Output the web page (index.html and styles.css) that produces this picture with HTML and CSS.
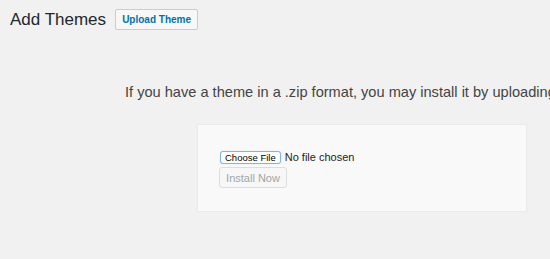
FILE: index.html
```html
<!DOCTYPE html>
<html lang="en">
<head>
    <meta charset="UTF-8">
    <meta name="viewport" content="width=device-width, initial-scale=1.0">
    <title>Add Themes</title>
    <link rel="stylesheet" href="styles.css">
</head>
<body>
    <div class="wrap">
        <div class="page-header">
            <h1 class="page-title">Add Themes</h1>
            <button class="upload-button">Upload Theme</button>
        </div>

        <div class="upload-theme">
            <p class="install-help">If you have a theme in a .zip format, you may install it by uploading it here.</p>
            <form class="upload-form">
                <div class="file-row">
                    <span class="file-button">Choose File</span>
                    <span class="file-name">No file chosen</span>
                </div>
                <button class="install-button" type="button" disabled>Install Now</button>
            </form>
        </div>
    </div>
</body>
</html>
```

FILE: styles.css
```css
body {
    font-family: "Liberation Sans", Arial, sans-serif;
    background-color: #f1f1f1;
    color: #444;
    margin: 0;
    overflow: hidden;
}
.wrap {
    padding: 9px 0 0 10px;
}
.page-header {
    display: flex;
    align-items: center;
    gap: 9px;
}
.page-title {
    font-size: 17px;
    font-weight: 400;
    color: #23282d;
    margin: 0;
    line-height: 21px;
}
.upload-button {
    font-family: inherit;
    font-size: 10px;
    font-weight: 700;
    color: #0073aa;
    background: #f7f7f7;
    border: 1px solid #ccc;
    border-radius: 2px;
    height: 21px;
    width: 83px;
    padding: 0;
}
.upload-theme {
    padding-left: 115px;
}
.install-help {
    font-size: 14.6px;
    margin: 0;
    padding-top: 53px;
    white-space: nowrap;
    line-height: 18px;
}
.upload-form {
    margin: 23px 0 0 72px;
    width: 306px;
    height: 61px;
    padding: 25px 0 0 22px;
    background: #f9f9f9;
    border: 1px solid #ebebeb;
    box-shadow: 0 1px 1px rgba(0, 0, 0, 0.04);
}
.file-row {
    display: flex;
    align-items: center;
    gap: 4px;
    height: 14px;
}
.file-button {
    font-size: 9.5px;
    color: #000;
    background: #fff;
    border: 1px solid #7eb4ea;
    border-radius: 3px;
    padding: 0 4px;
    height: 11px;
    line-height: 11px;
    white-space: nowrap;
    box-shadow: 0 0 1px #9ec5ef;
}
.file-name {
    font-size: 11px;
    color: #222;
    white-space: nowrap;
}
.install-button {
    display: block;
    margin-top: 3px;
    font-family: inherit;
    font-size: 11px;
    color: #a0a5aa;
    background: #f7f7f7;
    border: 1px solid #ddd;
    border-radius: 3px;
    width: 68px;
    height: 21px;
    padding: 0;
    margin-left: -1px;
}
```
